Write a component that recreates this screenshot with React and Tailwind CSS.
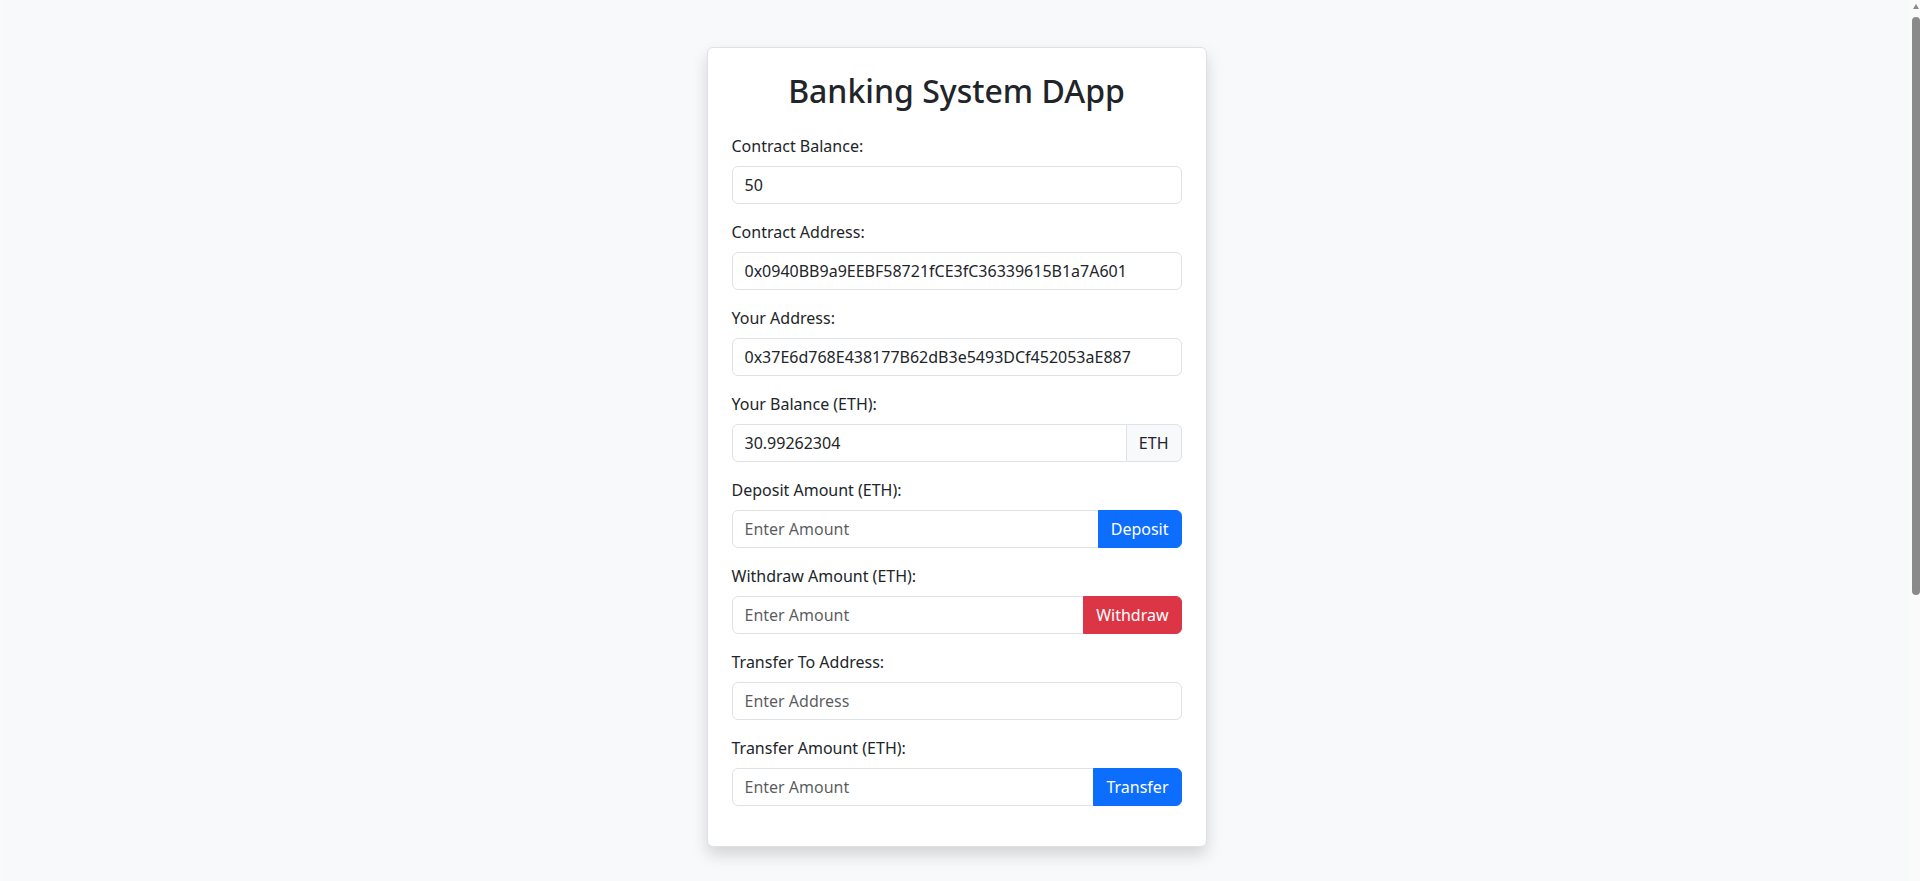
import React from "react";

const font = { fontFamily: '"Noto Sans", "Open Sans", sans-serif' };

function Label({ children }) {
  return (
    <label className="block mb-2 text-[16px] leading-6 text-[#212529]">{children}</label>
  );
}

const inputBase =
  "block h-[38px] px-3 py-[6px] text-[16px] leading-6 text-[#212529] bg-white border border-[#dee2e6] outline-none placeholder:text-[rgba(33,37,41,0.75)]";

function ReadField({ label, value }) {
  return (
    <div className="mb-4">
      <Label>{label}</Label>
      <input readOnly value={value} className={inputBase + " w-full rounded-[6px]"} style={font} />
    </div>
  );
}

function ActionField({ label, placeholder, button, color }) {
  return (
    <div className="mb-4">
      <Label>{label}</Label>
      <div className="flex w-full">
        <input
          placeholder={placeholder}
          className={inputBase + " flex-1 min-w-0 rounded-l-[6px]"}
          style={font}
        />
        {button && (
          <button
            className={
              "h-[38px] px-3 text-[16px] leading-6 text-white rounded-r-[6px] -ml-px border " + color
            }
            style={font}
          >
            {button}
          </button>
        )}
      </div>
    </div>
  );
}

export default function App() {
  return (
    <div className="flex h-[881px] overflow-hidden bg-[#f8f9fa]" style={font}>
      <div className="w-[4px] shrink-0 bg-[#fafafa]" />
      <main className="flex-1 pt-[47px]">
        <div className="mx-auto w-[500px] bg-white border border-[#dee2e6] rounded-[6px] shadow-[0_8px_16px_rgba(0,0,0,0.15)] p-6">
          <h2 className="text-center text-[32px] leading-[38px] font-medium text-[#212529] mb-6">
            Banking System DApp
          </h2>
          <ReadField label="Contract Balance:" value="50" />
          <ReadField label="Contract Address:" value="0x0940BB9a9EEBF58721fCE3fC36339615B1a7A601" />
          <ReadField label="Your Address:" value="0x37E6d768E438177B62dB3e5493DCf452053aE887" />
          <div className="mb-4">
            <Label>Your Balance (ETH):</Label>
            <div className="flex w-full">
              <input
                readOnly
                value="30.99262304"
                className={inputBase + " flex-1 min-w-0 rounded-l-[6px]"}
                style={font}
              />
              <span className="flex items-center h-[38px] px-3 -ml-px text-[16px] leading-6 text-[#212529] bg-[#f8f9fa] border border-[#dee2e6] rounded-r-[6px]">
                ETH
              </span>
            </div>
          </div>
          <ActionField
            label="Deposit Amount (ETH):"
            placeholder="Enter Amount"
            button="Deposit"
            color="bg-[#0d6efd] border-[#0d6efd]"
          />
          <ActionField
            label="Withdraw Amount (ETH):"
            placeholder="Enter Amount"
            button="Withdraw"
            color="bg-[#dc3545] border-[#dc3545]"
          />
          <div className="mb-4">
            <Label>Transfer To Address:</Label>
            <input placeholder="Enter Address" className={inputBase + " w-full rounded-[6px]"} style={font} />
          </div>
          <ActionField
            label="Transfer Amount (ETH):"
            placeholder="Enter Amount"
            button="Transfer"
            color="bg-[#0d6efd] border-[#0d6efd]"
          />
        </div>
      </main>
      <div className="w-[11px] shrink-0 bg-[#fafafa] flex flex-col pl-[3px]">
        <div className="h-[17px] flex items-start pt-[4px] pl-[1px]">
          <div className="w-0 h-0 border-l-[3px] border-r-[3px] border-b-[5px] border-l-transparent border-r-transparent border-b-[#8a8a8a]" />
        </div>
        <div className="h-[578px] w-[8px] rounded-[4px] bg-[#8a8a8a]" />
      </div>
    </div>
  );
}
